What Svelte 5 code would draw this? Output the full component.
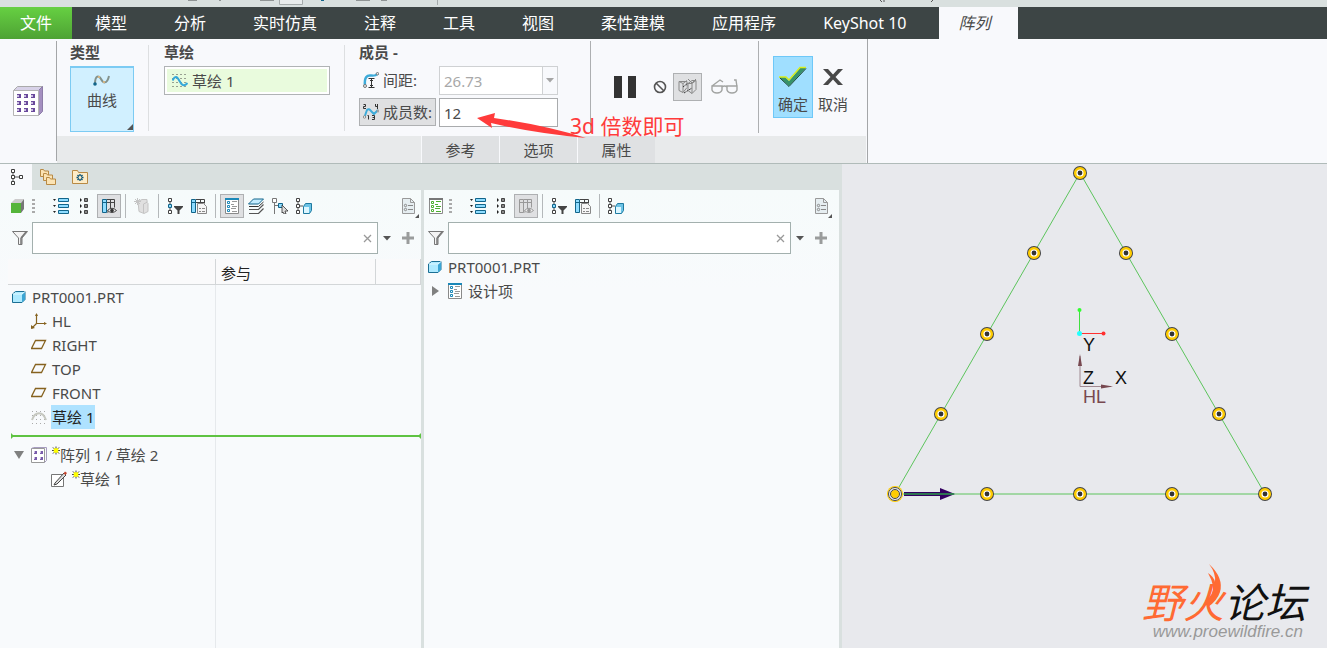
<script>
    let spacing = $state('26.73');
    let memberCount = $state('12');
    let sketchRef = $state('草绘 1');
    let leftFilter = $state('');
    let rightFilter = $state('');

    const menus = ['模型', '分析', '实时仿真', '注释', '工具', '视图', '柔性建模', '应用程序', 'KeyShot 10'];
    const panels = ['参考', '选项', '属性'];

    const features = [
        { name: 'PRT0001.PRT', icon: 'part', level: 0 },
        { name: 'HL', icon: 'csys', level: 1 },
        { name: 'RIGHT', icon: 'plane', level: 1 },
        { name: 'TOP', icon: 'plane', level: 1 },
        { name: 'FRONT', icon: 'plane', level: 1 },
        { name: '草绘 1', icon: 'sketchGray', level: 1, selected: true },
    ];
    const pending = [
        { name: '阵列 1 / 草绘 2', icon: 'pattern', level: 0, open: true },
        { name: '草绘 1', icon: 'pencil', level: 2 },
    ];

    // pattern members along the triangle, first one is the leader
    const members = [
        [51, 330], [143, 330], [236, 330], [328, 330], [421, 330],
        [375, 250], [328, 170], [282, 89], [236, 9],
        [190, 89], [143, 170], [97, 250],
    ];
</script>

{#snippet icon(name)}
    <svg class="icon" width="16" height="16" viewBox="0 0 16 16" fill="none" aria-hidden="true">
        {#if name === 'tree'}
            <path d="M5 4v8M7 8h6" stroke="#555" />
            <path d="M3.500 .5h3v3h-3zM3.500 6.500h3v3h-3zM3.500 12.500h3v3h-3zM11.500 6.500h3v3h-3z" fill="#fff" stroke="#3c3c3c" />
        {:else if name === 'folders'}
            <g fill="#fbe3b4" stroke="#b88a45">
                <path d="M.5 7.500v-7h3l1 1.500h4v5.500z" />
                <path d="M3.500 11.500v-7h3l1 1.500h5v5.500z" />
                <path d="M6.500 15.500v-7h3l1 1.500h5v5.500z" />
            </g>
        {:else if name === 'favorite'}
            <path d="M.5 14.500v-13h5l1 2h9v11z" fill="#fdecc8" stroke="#b88a45" />
            <path d="M8 5v2M8 10v2M4.500 8.500h2M9.500 8.500h2M5.500 6l1.500 1.500M10.500 6L9 7.500M5.500 11L7 9.500M10.500 11L9 9.500" stroke="#0b5478" stroke-width="1.400" />
        {:else if name === 'cube'}
            <path d="M1 5l4-4h9l-3 4z" fill="#ccc" />
            <path d="M11 5l3-4v10l-3 4z" fill="#777" />
            <path d="M1 5h10v10H1z" fill="#55b53a" />
        {:else if name === 'listBlue'}
            <path d="M0 1h3l-1.500 2zM0 7h3l-1.500 2zM0 13h3l-1.500 2z" fill="#222" />
            <path d="M5.500 .5h10v3h-10zM5.500 6.500h10v3h-10zM5.500 12.500h10v3h-10z" fill="#8edcff" stroke="#12658a" />
        {:else if name === 'listGray'}
            <path d="M3 0v4l2-2zM3 6v4l2-2zM3 12v4l2-2z" fill="#222" />
            <path d="M7.500 .5h3v3h-3zM7.500 6.500h3v3h-3zM7.500 12.500h3v3h-3z" fill="#888" stroke="#444" />
        {:else if name === 'columns' || name === 'columnsGray'}
            {@const on = name === 'columns'}
            <path d="M5.500 1.500h8v8M5.500 4.500h8M9.500 1v11M5.500 14h2" stroke={on ? '#444' : '#999'} />
            <path d="M1.500 1.500h4v13h-4zM1 4.500h5" fill={on ? '#8edcff' : '#ddd'} stroke={on ? '#12658a' : '#999'} />
            <path d="M6.500 12.500q4.500-4.500 9 0q-4.500 4-9 0" fill="#eee" stroke={on ? '#444' : '#999'} />
            <circle cx="11" cy="12.500" r="1.800" fill={on ? '#333' : '#999'} />
        {:else if name === 'ghost'}
            <path d="M4 3.500l4-2h5v3l1 1v8l-4 2-5-2z" fill="#e0e0e0" stroke="#c4c4c4" />
            <path d="M9.500 6v9M9.500 6l4-2" stroke="#c4c4c4" />
            <path d="M3.500 0v7M0 3.500h7M1 1l5 5M6 1L1 6" stroke="#c4c4c4" />
        {:else if name === 'treeFilter'}
            <path d="M3 4v8" stroke="#444" />
            <path d="M1.500 .5h3v3h-3zM1.500 12.500h3v3h-3z" fill="#fff" stroke="#444" />
            <path d="M1.500 6.500h3v3h-3z" fill="#8edcff" stroke="#12658a" />
            <path d="M7 8h9v1l-3.500 3.500V16h-2v-3.500L7 9z" fill="#444" />
        {:else if name === 'tablePage'}
            <path d="M5 1.500h8.500v4M5 4.500h8M9.500 1v5" stroke="#444" />
            <path d="M.5 1.500h4v13h-4zM0 4.500h5" fill="#8edcff" stroke="#12658a" />
            <path d="M6.500 5.500h6l3 3v7h-9z" fill="#f6f6f6" stroke="#888" />
            <path d="M8 10.500h2M11 10.500h3M8 13.500h2M11 13.500h3" stroke="#888" />
        {:else if name === 'layerTree' || name === 'designItems' || name === 'itemsGreen'}
            {@const tint = name === 'itemsGreen' ? '#4caf2e' : '#1b88b8'}
            <path d="M1.500 .5h13v15h-13z" fill="#fff" stroke="#8a8a8a" />
            <path d="M1 1h14" stroke={name === 'itemsGreen' ? '#777' : tint} stroke-width="2" />
            <path d="M3.500 3.500h2v2h-2zM3.500 7.500h2v2h-2zM3.500 11.500h2v2h-2z" stroke={tint} />
            <path d="M8 3.500h5M7 6.500h3M8 8.500h5M7 10.500h5M8 13.500h5" stroke={name === 'itemsGreen' ? tint : '#999'} />
        {:else if name === 'layers'}
            <path d="M1 15.500h9.500l5-5M1 11.500h9.500l5-5" stroke="#555" stroke-width="1.200" />
            <path d="M5.500 1h10l-5 5H.5z" fill="#c4ecff" stroke="#12658a" />
            <path d="M1 8.500h9.500l5-4.500" stroke="#333" />
        {:else if name === 'treeCursor'}
            <path d="M2.500 4v12M3 7.500h4" stroke="#777" />
            <path d="M.5 .5h4v4h-4z" fill="#fff" stroke="#777" />
            <path d="M6.500 5.500h4v4h-4z" fill="#8edcff" stroke="#12658a" />
            <path d="M10 7l6 6h-3l1 3-2 0-1-2-1 1z" fill="#ddd" stroke="#333" stroke-width=".8" />
        {:else if name === 'treeCube'}
            <path d="M2 4v8M4 8h3" stroke="#555" />
            <path d="M.5 .5h3v3h-3zM.5 6.500h3v3h-3zM.5 12.500h3v3h-3z" fill="#fff" stroke="#444" />
            <path d="M7.500 8.500l2-3h6v7l-2 3h-6z" fill="#6cc3e6" stroke="#1f7aa0" />
            <path d="M8 9h5v6H8z" fill="#dcf6ff" />
        {:else if name === 'page'}
            <path d="M1.500 .5h8l4 4v11h-12z" fill="#e6eef1" stroke="#999" />
            <path d="M9.500 .5v4h4" stroke="#999" />
            <path d="M7 7.500h5M7 11.500h5" stroke="#888" />
            <circle cx="4.500" cy="7.500" r="1.200" stroke="#888" />
            <circle cx="4.500" cy="11.500" r="1.200" stroke="#888" />
        {:else if name === 'funnel'}
            <path d="M.5 1.500h15L10 8v6.500H6.500V8z" fill="#f4f4f4" stroke="#777" />
            <path d="M9 8l5-6M9 8v6" stroke="#777" stroke-width="1.500" />
        {:else if name === 'part'}
            <path d="M1.500 5l3-2.500h9.500v8l-3 3H1.500z" fill="#aeeaff" stroke="#1b6f94" />
            <path d="M11 5.500l3-3v8l-3 3z" fill="#3ba5d4" />
            <path d="M2 5h9l3-2.500" stroke="#e0f8ff" />
        {:else if name === 'csys'}
            <path d="M5.500 1v9.500H15M5.500 10.500L1 15" stroke="#86621f" stroke-width="1.200" />
            <path d="M4 3l1.500-3L7 3zM13 9l3 1.500-3 1.500zM0 16v-4l4 3z" fill="#86621f" />
        {:else if name === 'plane'}
            <path d="M4.500 3.500h10l-4 8H.5z" stroke="#86621f" stroke-width="1.300" />
        {:else if name === 'sketchGray'}
            <path d="M1 2.500h14M1 6.500h14M1 10.500h14M1 14.500h14" stroke="#aaa" stroke-dasharray="1 3" />
            <path d="M1 11C4 2 12 2 15 11" stroke="#c6c8c0" stroke-width="2" />
        {:else if name === 'pattern'}
            <path d="M.5 1.500h13v14H.5z" fill="#fff" stroke="#999" />
            <path d="M.5 1.500l2-1h13v13l-2 2" stroke="#a79cc0" />
            <path d="M3 4h3v3H3zM9 4h3v3H9zM3 10h3v3H3zM9 10h3v3H9z" fill="#7a5cab" />
            <path d="M3 4h1v2H3zM9 4h1v2H9zM3 10h1v2H3zM9 10h1v2H9z" fill="#cbbfe0" />
        {:else if name === 'pencil'}
            <path d="M.5 3.500h12v12H.5z" fill="#fff" stroke="#777" />
            <path d="M4 12L13 2l2 2-9 9-3 1z" fill="#ddd" stroke="#444" />
            <path d="M12.500 2.500L14 .5 16 2l-1.500 2z" fill="#c4442e" />
        {:else if name === 'sketch'}
            <path d="M.5 1.500h15M.5 5.500h15M.5 9.500h15M.5 13.500h15" stroke="#444" stroke-dasharray="1 3" />
            <path d="M.5 7.500C3 2.500 5 3 7.500 8s5 5.500 8 2" stroke="#35a8da" stroke-width="2" />
        {:else if name === 'spacing'}
            <path d="M2 14C1 5 4 3 8 3.500s5 0 7-2" stroke="#3eabd9" stroke-width="2.500" />
            <path d="M5.500 6.500h6M5.500 15.500h6M8.500 7v8M7 9l1.500-1.500L10 9M7 13l1.500 1.500L10 13" stroke="#333" />
            <circle cx="2" cy="14" r="1.500" fill="#eee" stroke="#777" />
            <circle cx="14.500" cy="1.700" r="1.200" fill="#eee" stroke="#777" />
        {:else if name === 'count'}
            <path d="M1.500 13L4 6q2-2 4 1l3 3 4-4" stroke="#3eabd9" stroke-width="2" />
            <path d="M.5 .5h2v2h-2v2H3M12.500 0v2.500H15M14.500 0v5M4.500 11.500h1v4M9 11.500h2.500v4H9M9.500 13.500h2" stroke="#333" />
            <circle cx="1.500" cy="13" r="1.200" fill="#fff" stroke="#888" />
            <circle cx="15" cy="7" r="1" fill="#fff" stroke="#888" />
        {/if}
    </svg>
{/snippet}

{#snippet tool(name, label, pressed = false, disabled = false)}
    <button class={['tool', { pressed }]} aria-label={label} {disabled}>{@render icon(name)}</button>
{/snippet}

{#snippet spark()}
    <svg class="spark" width="8" height="9" viewBox="0 0 9 9" aria-hidden="true">
        <path d="M4.500 0v9M0 4.500h9M1 1l7 7M8 1L1 8" stroke="#333" />
        <path d="M2 2h5v5H2z" fill="#ff0" />
    </svg>
{/snippet}

{#snippet toggle(open)}
    <button class="toggle" aria-label={open ? '收起' : '展开'}>
        <svg width="10" height="10" viewBox="0 0 10 10">
            <path d={open ? 'M0 1h10L5 9z' : 'M2 0v10l7-5z'} fill="#808080" />
        </svg>
    </button>
{/snippet}

{#snippet node(item)}
    <div class={['node', `level-${item.level}`]}>
        {#if item.open !== undefined}{@render toggle(item.open)}{/if}
        {@render icon(item.icon)}
        <span class={['name', { selected: item.selected }]}>
            {#if item.icon === 'pattern' || item.icon === 'pencil'}{@render spark()}{/if}{item.name}
        </span>
    </div>
{/snippet}

{#snippet filterEnd()}
    <button class="caret" aria-label="搜索选项">
        <svg width="8" height="5" viewBox="0 0 8 5"><path d="M0 0h8L4 4.500z" fill="#555" /></svg>
    </button>
    <button class="plus" aria-label="添加">
        <svg width="12" height="12" viewBox="0 0 12 12"><path d="M6 0v12M0 6h12" stroke="#9a9c9c" stroke-width="3" /></svg>
    </button>
{/snippet}

{#snippet clear(onclick)}
    <button class="clear" aria-label="清除" {onclick}>
        <svg width="9" height="9" viewBox="0 0 9 9"><path d="M1 1l7 7M8 1L1 8" stroke="#999" stroke-width="1.300" /></svg>
    </button>
{/snippet}

<div class="app">
    <div class="titlebar">
        <svg width="100%" height="7" aria-hidden="true">
            <path d="M188 0h9v1h-9zM219 0h2v1h-2zM260 0h14v1h-14zM356 0h14v1h-14zM381 0h6v1h-6z" fill="#8f9494" />
            <path d="M279.500 0v4.500h23V0" fill="#e8ecec" stroke="#a5abab" />
            <path d="M321 0h3v1h-3z" fill="#12658a" />
            <path d="M437 0h1v5h-1z" fill="#a5abab" />
            <path d="M880 0l2 2M884 0v2M933 0l-2 2" stroke="#555" />
        </svg>
    </div>

    <nav class="menubar">
        <button class="file">文件</button>
        {#each menus as menu}
            <button>{menu}</button>
        {/each}
        <button class="active">阵列</button>
    </nav>

    <div class="ribbon">
        <div class="ribbon-icon">
            <svg width="30" height="30" viewBox="0 0 30 30" aria-hidden="true">
                <path d="M.5 4.500l4-4h25l-4 4z" fill="#d8d2e8" stroke="#aaa" />
                <path d="M25.500 4.500l4-4v25l-4 4z" fill="#a48fc0" stroke="#8d7da8" />
                <path d="M.5 4.500h25v25H.5z" fill="#fff" stroke="#b4b4b4" />
                {#each [8, 15, 22] as y}
                    {#each [4, 11, 18] as x}
                        <rect {x} {y} width="4" height="4" fill="#6a4a9c" />
                        <rect {x} y={y + 1} width="2" height="2" fill="#cbbfe0" />
                    {/each}
                {/each}
            </svg>
        </div>
        <div class="dashboard">
            <div class="groups">
                <section class="group type">
                    <h2>类型</h2>
                    <button class="curve">
                        <svg width="18" height="12" viewBox="0 0 18 12" fill="none" aria-hidden="true">
                            <path d="M2 10C2 1 6 1 8 5s6 6 8-3" stroke="#84928c" stroke-width="2" />
                            <path d="M5 3l2 0M10 8l2 0" stroke="#d3b483" stroke-width="2" />
                            <circle cx="2" cy="10" r="1.800" fill="#12658a" />
                        </svg>
                        <span>曲线</span>
                    </button>
                </section>
                <span class="rule light"></span>
                <section class="group sketch">
                    <h2><label for="sketch">草绘</label></h2>
                    <div class="collector">
                        {@render icon('sketch')}
                        <input id="sketch" bind:value={sketchRef} readonly />
                    </div>
                </section>
                <span class="rule light"></span>
                <section class="group members">
                    <h2>成员 -</h2>
                    <div class="member-grid">
                        <label class="pick" for="spacing">{@render icon('spacing')}间距:</label>
                        <div class="combo">
                            <input id="spacing" bind:value={spacing} disabled />
                            <button disabled aria-label="间距列表">
                                <svg width="8" height="5" viewBox="0 0 8 5"><path d="M0 0h8L4 4.500z" fill="#a5a5a5" /></svg>
                            </button>
                        </div>
                        <label class="pick on" for="count">{@render icon('count')}成员数:</label>
                        <input id="count" class="count" bind:value={memberCount} />
                    </div>
                </section>
                <span class="rule"></span>
                <section class="group controls">
                    <button class="pause" aria-label="暂停">
                        <svg width="22" height="22" viewBox="0 0 22 22"><path d="M0 0h8v22H0zM14 0h8v22h-8z" fill="#333" /></svg>
                    </button>
                    <button class="none" aria-label="无预览">
                        <svg width="14" height="14" viewBox="0 0 14 14" fill="none" stroke="#555" stroke-width="1.600">
                            <circle cx="7" cy="7" r="5.500" /><path d="M3 3l8 8" />
                        </svg>
                    </button>
                    <button class="attached pressed" aria-label="连接预览">
                        <svg width="19" height="18" viewBox="0 0 19 18" fill="none" stroke="#888">
                            <path d="M1 3.500l4 2v9l-4-2zM5 5.500l4-3M1 3.500h8v5M5 14.500l4-5M10 5.500l4-3h4v9l-4 4-4-3zM10 5.500h4v10M14 5.500l4-3M10 1l4 4M18 1l-4 4" />
                            <path d="M5 9l5-4M6 15l8-5" stroke="#333" stroke-dasharray="2 1" />
                        </svg>
                    </button>
                    <button class="verify" aria-label="校验模式">
                        <svg width="27" height="15" viewBox="0 0 27 15" fill="none" stroke="#a2a4a2" stroke-width="1.400">
                            <path d="M1 7h10v4q-1 3-5 3t-5-3zM16 7h10v4q-1 3-5 3t-5-3zM11 8q2.500-2 5 0M1 7l8-6 3 2M26 8L25 1h-2" />
                        </svg>
                    </button>
                </section>
                <span class="rule"></span>
                <section class="group finish">
                    <button class="ok">
                        <svg width="30" height="22" viewBox="0 0 30 22" aria-hidden="true">
                            <path d="M1 11h6l4 4L22 2h6L11 20z" fill="#36936a" />
                            <path d="M1 11h7l3 3L22 1.500h6" fill="none" stroke="#d7ee1c" stroke-width="1.500" />
                            <path d="M2 12l9 8.500L28 2.500" fill="none" stroke="#1e4a37" />
                        </svg>
                        <span>确定</span>
                    </button>
                    <button class="cancel">
                        <svg width="30" height="22" viewBox="0 0 30 22" aria-hidden="true">
                            <path d="M5 3h5l5 5.500L20 3h5l-7.500 8 7.500 8h-5l-5-5.500L10 19H5l7.500-8z" fill="#484848" />
                        </svg>
                        <span>取消</span>
                    </button>
                </section>
            </div>
            <div class="subtabs">
                {#each panels as panel}
                    <button>{panel}</button>
                {/each}
            </div>
            <div class="note">
                <svg width="110" height="28" viewBox="0 0 110 28" aria-hidden="true">
                    <path d="M0 6L18 1l-1 5q50 7 92 20Q56 21 14 11l1 5z" fill="#ff3b3b" />
                </svg>
                <span>3d 倍数即可</span>
            </div>
        </div>
    </div>

    <main class="workspace">
        <div class="dock">
            <div class="dock-tabs">
                <button class="active" aria-label="模型树">{@render icon('tree')}</button>
                <button aria-label="文件夹浏览器">{@render icon('folders')}</button>
                <button aria-label="收藏夹">{@render icon('favorite')}</button>
            </div>
            <div class="panes">
                <section class="pane left">
                    <div class="toolbar">
                        {@render tool('cube', '模型')}
                        <span class="grip"></span>
                        {@render tool('listBlue', '全部展开')}
                        {@render tool('listGray', '全部折叠')}
                        {@render tool('columns', '显示列', true)}
                        <span class="sep"></span>
                        {@render tool('ghost', '预览', false, true)}
                        <span class="sep"></span>
                        {@render tool('treeFilter', '树过滤器')}
                        {@render tool('tablePage', '树列')}
                        <span class="sep"></span>
                        {@render tool('layerTree', '设计树', true)}
                        {@render tool('layers', '层')}
                        {@render tool('treeCursor', '选择')}
                        {@render tool('treeCube', '几何')}
                        <span class="last">{@render tool('page', '设置')}</span>
                    </div>
                    <div class="filter">
                        {@render icon('funnel')}
                        <div class="search">
                            <input aria-label="过滤模型树" bind:value={leftFilter} />
                            {@render clear(() => leftFilter = '')}
                        </div>
                        {@render filterEnd()}
                    </div>
                    <div class="table-wrap">
                        <table>
                            <thead>
                                <tr><th class="col-name" aria-label="名称"></th><th class="col-part">参与</th><th aria-label="其他"></th></tr>
                            </thead>
                            <tbody>
                                {#each features as item}
                                    <tr><td>{@render node(item)}</td><td></td><td></td></tr>
                                {/each}
                                <tr class="insert"><td colspan="3"><div class="marker"></div></td></tr>
                                {#each pending as item}
                                    <tr><td>{@render node(item)}</td><td></td><td></td></tr>
                                {/each}
                                <tr class="rest"><td></td><td></td><td></td></tr>
                            </tbody>
                        </table>
                    </div>
                </section>
                <section class="pane right">
                    <div class="toolbar">
                        {@render tool('itemsGreen', '设计项')}
                        <span class="grip"></span>
                        {@render tool('listBlue', '全部展开')}
                        {@render tool('listGray', '全部折叠')}
                        {@render tool('columnsGray', '显示列', true, true)}
                        <span class="sep"></span>
                        {@render tool('treeFilter', '树过滤器')}
                        {@render tool('tablePage', '树列')}
                        <span class="sep"></span>
                        {@render tool('treeCube', '几何')}
                        <span class="last">{@render tool('page', '设置')}</span>
                    </div>
                    <div class="filter">
                        {@render icon('funnel')}
                        <div class="search">
                            <input aria-label="过滤设计项" bind:value={rightFilter} />
                            {@render clear(() => rightFilter = '')}
                        </div>
                        {@render filterEnd()}
                    </div>
                    <ul>
                        <li>{@render node({ name: 'PRT0001.PRT', icon: 'part', level: 0 })}</li>
                        <li>{@render node({ name: '设计项', icon: 'designItems', level: 0, open: false })}</li>
                    </ul>
                </section>
            </div>
        </div>

        <div class="canvas">
            <svg class="scene" width="485" height="400" viewBox="-2 0 485 400">
                <path d="M51 330L236 9l185 321z" fill="none" stroke="#5cc45c" />
                <!-- spin center -->
                <path d="M235.500 147v22" stroke="#3fe03f" />
                <path d="M237 169.500h22" stroke="#ff3030" />
                <circle cx="235.500" cy="146" r="2" fill="#2fff2f" />
                <circle cx="259.500" cy="169.500" r="2" fill="#ff3030" />
                <circle cx="235.500" cy="169.500" r="2.500" fill="#2ff" />
                <!-- csys HL -->
                <path d="M236 222.500V192M236 222.500h31" fill="none" stroke="#a08a92" />
                <path d="M234 202l2-12 2 12zM257 220.500l12 2-12 2z" fill="#774850" />
                <text x="239" y="187">Y</text>
                <text x="239" y="220">Z</text>
                <text x="271" y="220">X</text>
                <text class="csys-name" x="239" y="239">HL</text>
                <path d="M60 328h40v4H60z" fill="#340060" />
                <path d="M96 324l15 6-15 6z" fill="#340060" />
                <path d="M60 330h50" stroke="#2c9c4c" stroke-width="1.500" />
                {#each members as [x, y], i}
                    {#if i === 0}
                        <circle cx={x} cy={y} r="8" fill="#fc0" />
                        <circle cx={x} cy={y} r="5.500" fill="#fc0" stroke="#eee" stroke-width="3" />
                        <circle cx={x} cy={y} r="6.500" fill="none" stroke="#444" />
                        <circle cx={x} cy={y} r="4.500" fill="none" stroke="#444" />
                    {:else}
                        <circle cx={x} cy={y} r="7" fill="#444" />
                        <circle cx={x} cy={y} r="4.800" fill="#fff" stroke="#fc0" stroke-width="2.500" />
                        <circle cx={x} cy={y} r="2.400" fill="#333" />
                    {/if}
                {/each}
            </svg>
            <div class="watermark">
                <svg width="20" height="44" viewBox="0 0 20 44" aria-hidden="true">
                    <path d="M5 0Q20 14 16 28 13 37 4 43L1 37Q10 31 9 22 8 16 4 9q6 4 7 9Q12 9 5 0z" fill="#ff6a33" />
                </svg>
                <strong><em>野火</em>论坛</strong>
                <span>www.proewildfire.cn</span>
            </div>
        </div>
    </main>
</div>

<style>
:global(body) {
    margin: 0;
}
.app {
    display: flex;
    flex-direction: column;
    min-height: 100vh;
    background: #f8f9fc;
    color: #4a4a4a;
    font: 15px/20px "Noto Sans", "Noto Sans CJK SC", sans-serif;
}
button,
input {
    border: 0;
    margin: 0;
    padding: 0;
    background: transparent;
    color: inherit;
    font: inherit;
}
.app,
.app * {
    box-sizing: border-box;
}
svg {
    display: block;
    flex: none;
}

.titlebar {
    height: 7px;
    background: #d9e0df;
    overflow: hidden;
}
.menubar {
    display: flex;
    height: 32px;
    background: #3d4545;
    color: #fff;
    font-size: 16px;
}
.menubar button {
    padding: 0 24px 0 23px;
    line-height: 32px;
    white-space: nowrap;
}
.menubar .file {
    width: 72px;
    padding: 0;
    background: linear-gradient(#66d042, #4ea234);
}
.menubar .active {
    margin-left: 8px;
    padding-left: 20px;
    padding-right: 27px;
    background: #f8f9fc;
    color: #4a4a4a;
    font-style: italic;
}

.ribbon {
    display: flex;
    height: 125px;
    border-bottom: 1px solid #b0bbb9;
}
.ribbon-icon {
    display: flex;
    align-items: center;
    width: 57px;
    margin: 2px 0;
    padding-left: 13px;
    border-right: 1px solid #a4a6a8;
}
.dashboard {
    position: relative;
    display: flex;
    flex-direction: column;
    border-right: 1px solid #a4a6a8;
}
.groups {
    display: flex;
    flex: 1;
}
.group {
    padding-top: 3px;
}
.group h2 {
    margin: 0 0 4px;
    font-size: 15px;
    font-weight: 700;
    line-height: 20px;
}
.rule {
    width: 1px;
    margin: 2px 0 3px;
    background: #adafb1;
}
.rule.light {
    margin: 6px 0 5px;
    background: #dddfe1;
}
.type {
    padding-left: 13px;
    padding-right: 14px;
}
.curve {
    position: relative;
    display: flex;
    flex-direction: column;
    align-items: center;
    gap: 4px;
    width: 64px;
    height: 66px;
    padding-top: 6px;
    border: 1px solid #7ccbf3;
    border-top-width: 2px;
    background: #d1f0ff;
}
.curve::after {
    content: "";
    position: absolute;
    right: 0;
    bottom: 1px;
    border-left: 6px solid transparent;
    border-bottom: 6px solid #555;
}
.sketch {
    padding-left: 15px;
    padding-right: 14px;
}
.collector {
    display: flex;
    align-items: center;
    gap: 4px;
    width: 166px;
    height: 29px;
    padding-left: 7px;
    border: 1px solid #b0b3b5;
    background: #e9fbdd;
    box-shadow: inset 0 0 0 2px #fff;
}
.collector input {
    width: 120px;
}
.members {
    padding-left: 14px;
    padding-right: 32px;
}
.member-grid {
    display: grid;
    grid-template-columns: 77px 119px;
    gap: 3px;
}
.pick {
    display: flex;
    align-items: center;
    gap: 4px;
    height: 28px;
    padding-left: 3px;
    border: 1px solid transparent;
    white-space: nowrap;
}
.pick.on,
.pressed {
    border: 1px solid #aeb0b2;
    background: #dfe0e2;
}
.combo {
    display: flex;
    height: 29px;
    border: 1px solid #cfd1d3;
    background: #fff;
}
.combo input {
    flex: 1;
    min-width: 0;
    padding-left: 4px;
    color: #a8a8a8;
}
.combo button {
    display: flex;
    align-items: center;
    justify-content: center;
    width: 15px;
    border-left: 1px solid #cfd1d3;
    background: #f8f9fc;
}
.count {
    height: 29px;
    padding-left: 4px;
    border: 1px solid #a9abad;
    background: #fff;
}
.controls {
    display: flex;
    align-items: center;
    padding: 0 20px 2px 23px;
}
.none {
    margin: 0 6px 0 17px;
}
.attached {
    display: grid;
    place-items: center;
    width: 29px;
    height: 28px;
    margin-right: 9px;
}
.finish {
    display: flex;
    align-items: center;
    gap: 5px;
    padding: 0 19px 2px 14px;
}
.ok,
.cancel {
    display: flex;
    flex-direction: column;
    align-items: center;
    gap: 6px;
    width: 40px;
    height: 62px;
    padding-top: 9px;
    border: 1px solid transparent;
    white-space: nowrap;
}
.ok {
    border-color: #6ec8f8;
    background: #a0dfff;
}
.cancel {
    width: 30px;
}
.subtabs {
    display: flex;
    height: 27px;
    margin-right: 1px;
    padding-left: 364px;
    background: #e8eaeb;
}
.subtabs button {
    width: 78px;
    border-left: 1px solid #f8f9fc;
    background: #dfe1e3;
    line-height: 28px;
}
.note {
    position: absolute;
    left: 420px;
    top: 73px;
    display: flex;
    color: #ff3b3b;
    font-size: 21px;
    line-height: 28px;
    white-space: nowrap;
    pointer-events: none;
}
.note span {
    margin-left: -17px;
}

.workspace {
    display: flex;
    flex: 1;
}
.dock {
    display: flex;
    flex: 0 0 842px;
    flex-direction: column;
    background: #d9e0df;
}
.dock-tabs {
    display: flex;
    height: 26px;
}
.dock-tabs button {
    display: grid;
    place-items: center;
    width: 32px;
}
.dock-tabs .active {
    background: #f8f9fc;
}
.panes {
    display: flex;
    flex: 1;
    gap: 3px;
    padding-right: 3px;
}
.pane {
    display: flex;
    flex-direction: column;
    background: linear-gradient(#f6fbfb, #f8fafc 100px);
}
.left {
    width: 421px;
}
.right {
    flex: 1;
    padding-right: 5px;
}
.toolbar {
    display: flex;
    align-items: center;
    height: 32px;
}
.left .toolbar {
    padding-left: 6px;
}
.tool {
    display: grid;
    place-items: center;
    width: 24px;
    height: 24px;
}
.grip {
    width: 3px;
    height: 15px;
    margin: 0 14px 0 2px;
    background: repeating-linear-gradient(#aaa 0 2px, transparent 2px 4px);
}
.right .grip {
    margin-left: 1px;
}
.sep {
    width: 1px;
    height: 24px;
    margin: 0 4px;
    background: #b4b8ba;
}
.last {
    position: relative;
    margin-left: auto;
}
.last::after {
    content: "";
    position: absolute;
    right: 2px;
    bottom: 0;
    border-left: 4px solid transparent;
    border-bottom: 4px solid #555;
}
.filter {
    display: flex;
    align-items: center;
    height: 32px;
    padding-left: 4px;
}
.left .filter {
    padding-left: 12px;
}
.search {
    display: flex;
    flex: 1;
    height: 32px;
    margin-left: 4px;
    border: 1px solid #a3b0ae;
    background: #fff;
}
.search input {
    flex: 1;
    min-width: 0;
    padding-left: 6px;
}
.clear {
    padding: 0 5px;
}
.caret {
    padding: 0 5px;
}
.plus {
    padding: 0 7px 0 6px;
}

.table-wrap {
    flex: 1;
    padding-left: 8px;
    margin-top: 5px;
    display: flex;
}
table {
    width: 100%;
    table-layout: fixed;
    border-collapse: separate;
    border-spacing: 0;
    background: linear-gradient(#e6e9ec, #e6e9ec) 207px 0 / 1px 100% no-repeat;
}
th {
    height: 26px;
    padding: 3px 0 0 5px;
    border-right: 1px solid #d3d6d8;
    border-bottom: 1px solid #d3d6d8;
    background: #fafafb;
    color: #222;
    font-weight: 400;
    text-align: left;
}
.col-name {
    width: 208px;
}
.col-part {
    width: 160px;
}
td {
    height: 24px;
    padding: 0;
}
.insert td {
    height: 14px;
}
.rest td {
    height: auto;
}
.marker {
    display: flex;
    align-items: center;
    justify-content: space-between;
    height: 6px;
    margin-left: 3px;
    background: linear-gradient(#5fc342, #5fc342) center / 100% 2px no-repeat;
}
.marker::before,
.marker::after {
    content: "";
    border: 3px solid transparent;
    border-right-width: 0;
    border-left-color: #5fc342;
}
.marker::after {
    border-width: 3px 3px 3px 0;
    border-right-color: #5fc342;
}
.node {
    display: flex;
    align-items: center;
    gap: 4px;
    height: 24px;
    padding-left: 3px;
    white-space: nowrap;
}
.level-1 {
    padding-left: 23px;
}
.level-2 {
    padding-left: 43px;
}
.toggle {
    display: grid;
    place-items: center;
    width: 16px;
    height: 16px;
}
.name {
    display: flex;
    padding: 0 1px;
    line-height: 24px;
}
.selected {
    background: #aee2ff;
    color: #222;
}
.spark {
    margin-top: 3px;
}
ul {
    margin: 0;
    padding: 1px 0 0;
    list-style: none;
}

.canvas {
    position: relative;
    flex: 1;
    overflow: hidden;
    background: #e8e9ed;
}
.scene text {
    fill: #111;
    font: 18px "Liberation Sans", sans-serif;
}
.scene .csys-name {
    fill: #774850;
}
.watermark {
    position: absolute;
    right: 21px;
    bottom: 7px;
    display: flex;
    flex-direction: column;
    align-items: flex-end;
}
.watermark svg {
    position: absolute;
    right: 82px;
    top: -17px;
}
.watermark strong {
    color: #111;
    font-size: 41px;
    font-style: italic;
    font-weight: 400;
    line-height: 42px;
}
.watermark em {
    color: #ff6a33;
}
.watermark span {
    padding-right: 3px;
    color: #999;
    font: italic 17px/18px "Liberation Sans", sans-serif;
}
</style>
